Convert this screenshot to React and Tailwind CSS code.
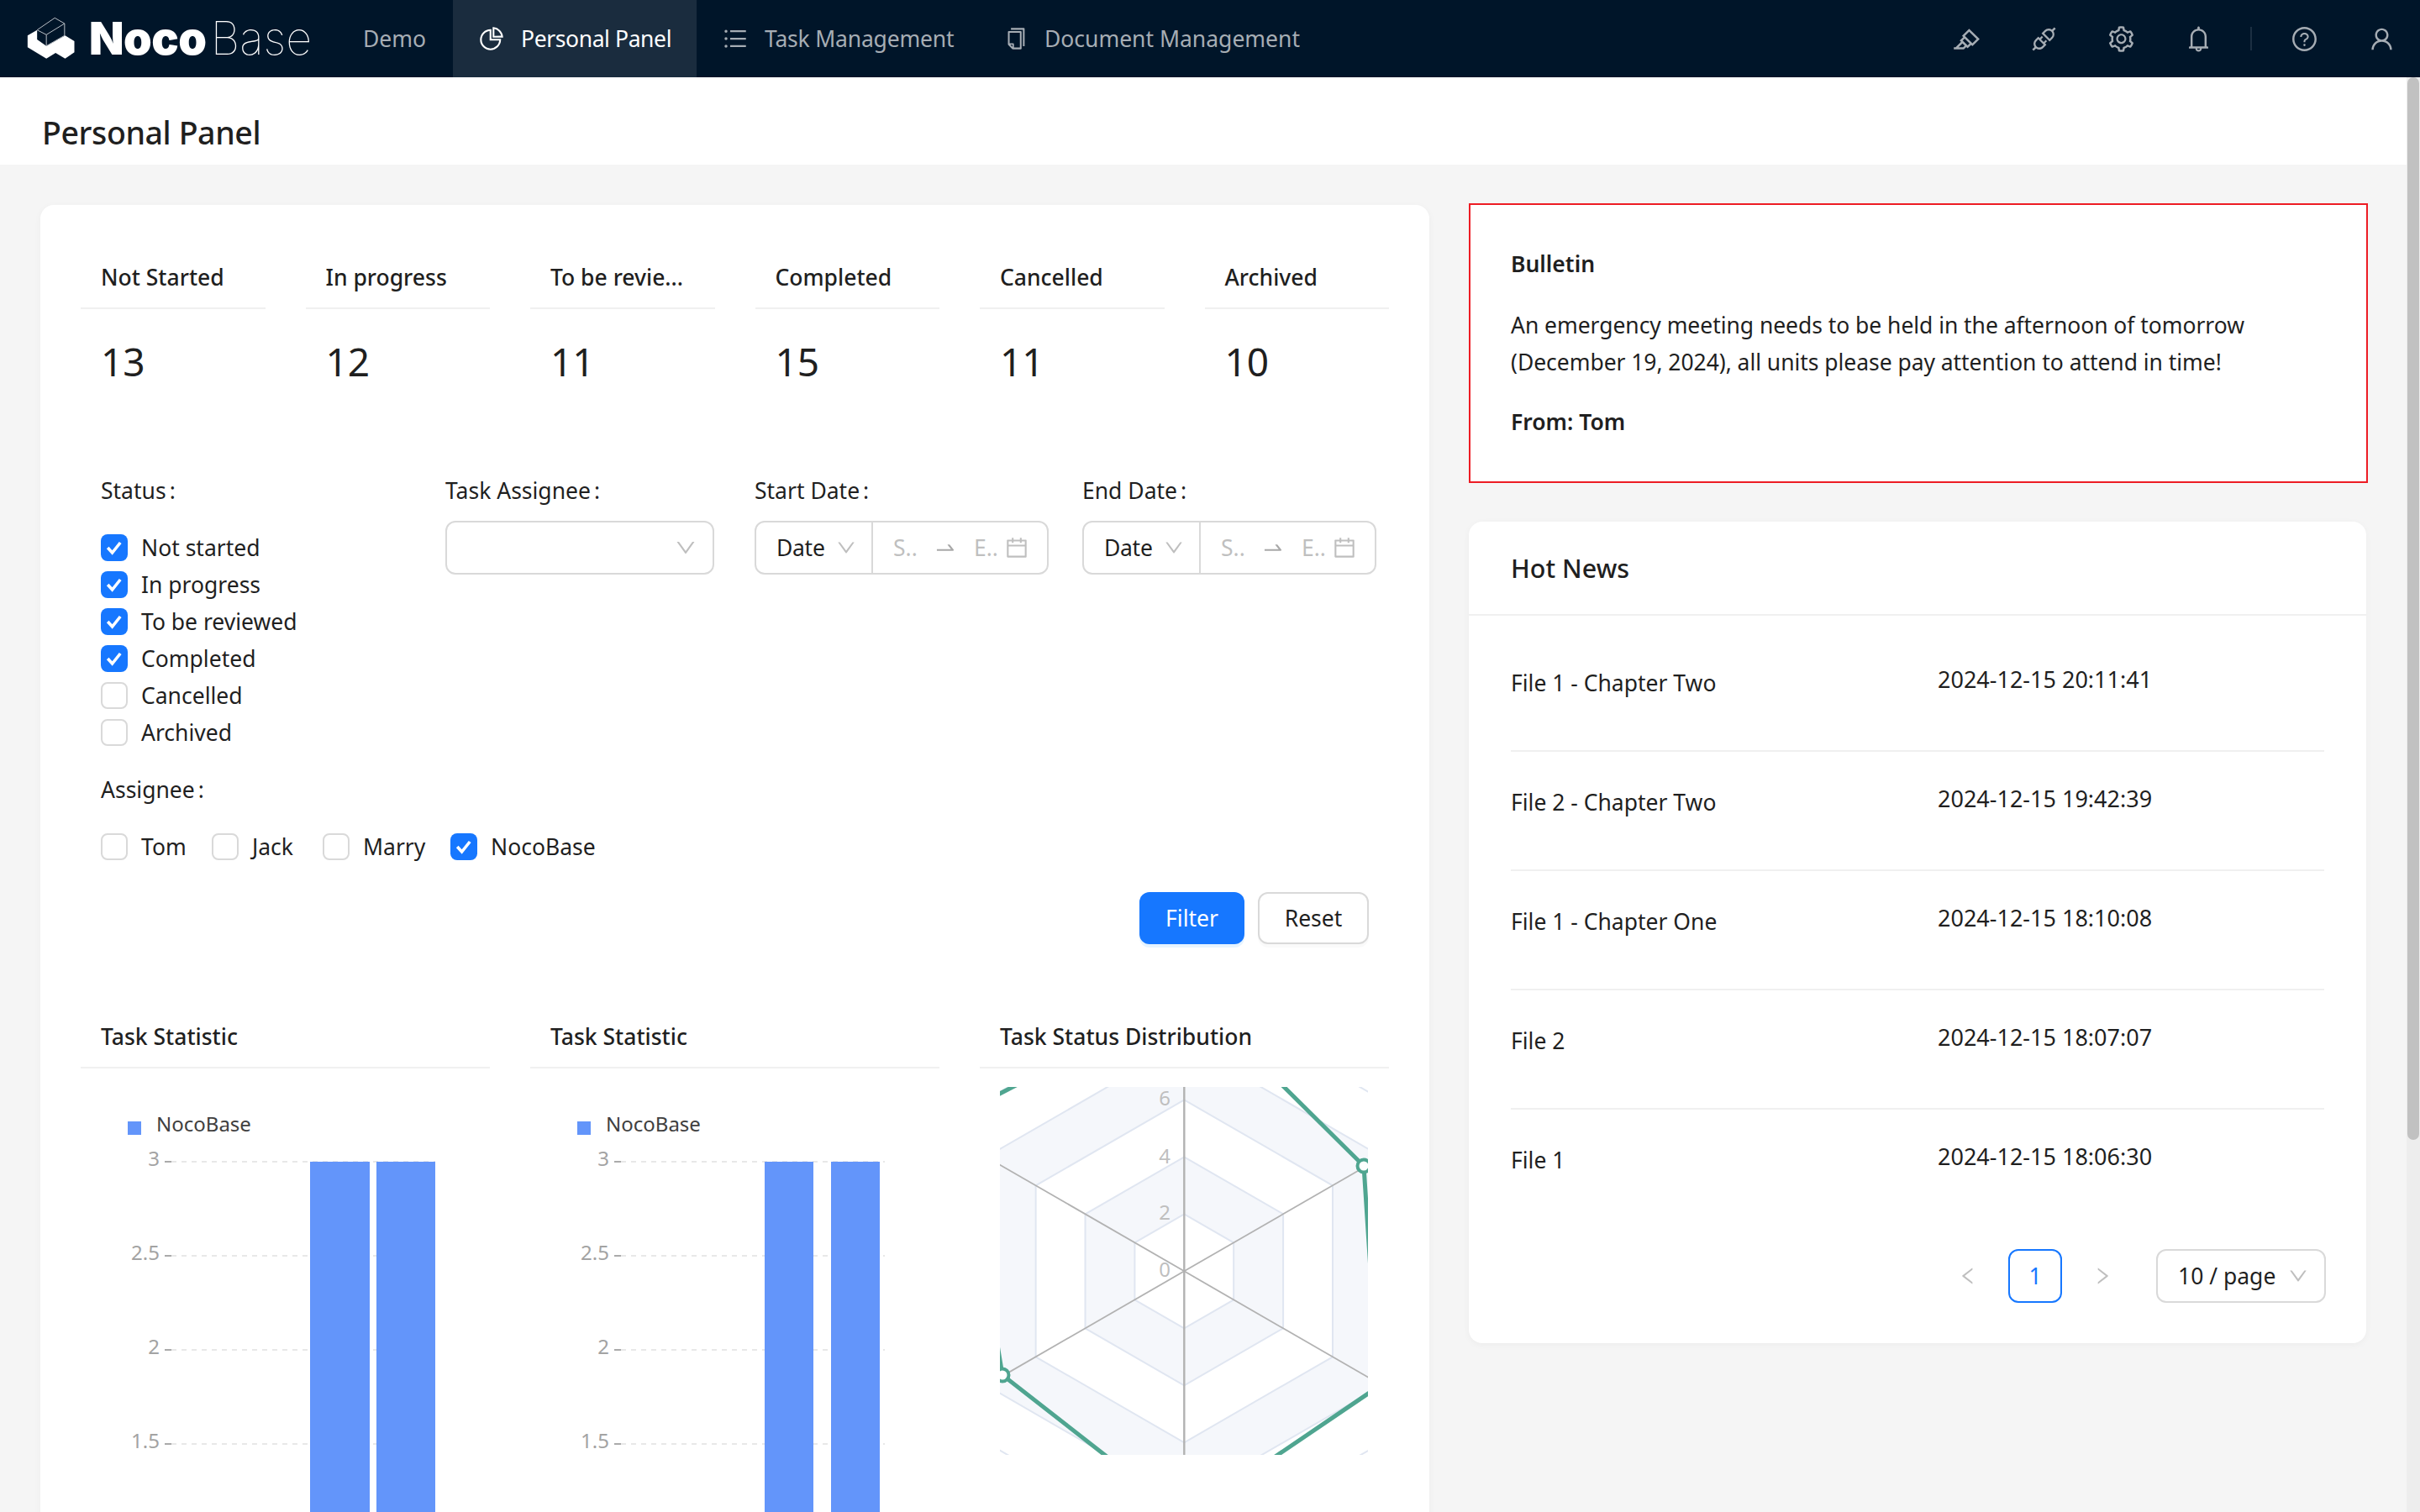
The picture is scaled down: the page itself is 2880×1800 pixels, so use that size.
import React from "react";
import {
  AiOutlineHighlight, AiOutlineApi, AiOutlineSetting, AiOutlineBell, AiOutlineQuestionCircle,
  AiOutlineUser, AiOutlinePieChart, AiOutlineUnorderedList, AiOutlineCopy, AiOutlineDown,
  AiOutlineCalendar, AiOutlineSwapRight, AiOutlineLeft, AiOutlineRight,
} from "react-icons/ai";

function Logo() {
  return (
    <div className="flex items-center w-[400px] pl-[30px] shrink-0">
      <svg width="62" height="55" viewBox="30 25 185 165" className="shrink-0 mb-[1px]">
        <polygon fill="#fff" points="38,98 72,78 72,112 105,135 172,98 205,118 205,158 172,180 138,160 105,180 38,140" />
        <path d="M72 78 L135 35 L170 55 L170 98 L105 135 L105 95 Z M105 95 L170 55" fill="#001529" stroke="#b9bfc5" strokeWidth="3" strokeLinejoin="round" />
      </svg>
      <div className="flex items-center ml-[14px] font-['Inter',sans-serif] text-[54px] leading-[92px] text-white tracking-[-0.5px]">
        <span className="font-black">Noco</span>
        <span className="font-thin ml-[5px] tracking-[0px]">Base</span>
      </div>
    </div>
  );
}

function NavItem({ icon: Icon, label, active, width, tracking }) {
  return (
    <div className={(active ? "bg-[#1a2c3e] text-white " : "text-[#a6adb4] ") + "flex items-center h-[92px] pl-[32px] shrink-0 " + width}>
      {Icon ? <Icon size={32} className="-ml-[2px] mr-[19px]" /> : null}
      <span className={"whitespace-nowrap " + (tracking || "")}>{label}</span>
    </div>
  );
}

function Header() {
  const rightA = [AiOutlineHighlight, AiOutlineApi, AiOutlineSetting, AiOutlineBell];
  return (
    <div className="flex items-center h-[92px] bg-[#001529] shrink-0">
      <Logo />
      <div className="flex items-center">
        <NavItem label="Demo" width="w-[139px]" />
        <NavItem label="Personal Panel" icon={AiOutlinePieChart} active width="w-[290px]" tracking="tracking-[-0.4px]" />
        <NavItem label="Task Management" icon={AiOutlineUnorderedList} width="w-[336px]" tracking="tracking-[-0.2px]" />
        <NavItem label="Document Management" icon={AiOutlineCopy} width="w-[382px]" />
      </div>
      <div className="ml-auto flex items-center text-[#a6adb4]">
        {rightA.map((I, i) => (
          <div key={i} className="w-[92px] h-[92px] flex items-center justify-center"><I size={35} /></div>
        ))}
        <div className="w-[2px] h-[28px] bg-[#1c2f42] mx-[16px]" />
        <div className="w-[92px] h-[92px] flex items-center justify-center"><AiOutlineQuestionCircle size={33} /></div>
        <div className="w-[92px] h-[92px] flex items-center justify-center"><AiOutlineUser size={33} /></div>
      </div>
    </div>
  );
}

function Check({ checked }) {
  return (
    <span className={checked ? "w-[32px] h-[32px] rounded-[8px] bg-[#1677ff] flex items-center justify-center shrink-0" : "w-[32px] h-[32px] rounded-[8px] border-2 border-[#d9d9d9] bg-white shrink-0"}>
      {checked ? (
        <svg width="24" height="24" viewBox="0 0 20 20"><polyline points="3.5,10 8,15 16,5" fill="none" stroke="#fff" strokeWidth="3" /></svg>
      ) : null}
    </span>
  );
}

function CheckItem({ label, checked, className }) {
  return (
    <div className={"flex items-center h-[44px] " + (className || "")}>
      <Check checked={checked} />
      <span className="ml-[16px]">{label}</span>
    </div>
  );
}

function FormLabel({ children }) {
  return <div className="h-[44px] leading-[44px]">{children}<span className="ml-[4px]">:</span></div>;
}

function DateRange() {
  return (
    <div className="flex w-[350px] h-[64px] border-2 border-[#d9d9d9] rounded-[12px] items-center">
      <div className="w-[139px] h-full flex items-center pl-[24px] border-r-2 border-[#d9d9d9] shrink-0">
        <span className="tracking-[-0.3px]">Date</span>
        <AiOutlineDown size={26} className="ml-[12px] text-[#bfbfbf]" />
      </div>
      <div className="flex-1 flex items-center pl-[24px] text-[#bfbfbf]">
        <span className="w-[40px]">S..</span>
        <AiOutlineSwapRight size={28} className="ml-[8px] text-[#a8a8a8]" />
        <span className="ml-[20px] w-[36px]">E..</span>
        <AiOutlineCalendar size={30} className="text-[#bfbfbf]" />
      </div>
    </div>
  );
}

function Stat({ label, value }) {
  return (
    <div className="flex-1 min-w-0">
      <div className="h-[74px] flex items-center pl-[24px] border-b-2 border-[#f0f0f0] font-medium whitespace-nowrap">{label}</div>
      <div className="h-[124px] flex items-center pl-[24px] text-[46px]">{value}</div>
    </div>
  );
}

function BarChart({ bars }) {
  const ticks = [["3", 111], ["2.5", 223], ["2", 335], ["1.5", 447]];
  return (
    <svg width="487" height="528" className="block">
      <rect x="56" y="63" width="16" height="16" fill="#6395fa" />
      <text x="90" y="69" dominantBaseline="middle" fontSize="24" fill="#404040">NocoBase</text>
      {ticks.map(([t, y]) => (
        <g key={t}>
          <line x1="108" x2="422" y1={y} y2={y} stroke="#e8e8e8" strokeWidth="2" strokeDasharray="6 6" />
          <line x1="100" x2="108" y1={y} y2={y} stroke="#aaaaaa" strokeWidth="2" />
          <text x="94" y={y - 1} textAnchor="end" dominantBaseline="middle" fontSize="24" fill="#a3a3a3">{t}</text>
        </g>
      ))}
      {bars.map(([x, w]) => (
        <rect key={x} x={x} y="111" width={w} height="420" fill="#6395fa" />
      ))}
    </svg>
  );
}

function Radar() {
  const c = [1409.3, 1514.3];
  const hex = (r) =>
    [-90, -30, 30, 90, 150, 210]
      .map((d) => {
        const a = (d * Math.PI) / 180;
        return `${c[0] + r * Math.cos(a)},${c[1] + r * Math.sin(a)}`;
      })
      .join(" ");
  const spoke = (d) => {
    const a = (d * Math.PI) / 180;
    return [c[0] + 340 * Math.cos(a), c[1] + 340 * Math.sin(a)];
  };
  return (
    <svg width="438" height="438" viewBox="1190 1295 438 438" className="block ml-[24px] mt-[22px]">
      <polygon points={hex(340)} fill="#fff" stroke="#e0e6f1" strokeWidth="2" />
      <polygon points={hex(272)} fill="#f5f7fb" stroke="#e0e6f1" strokeWidth="2" />
      <polygon points={hex(204)} fill="#fff" stroke="#e0e6f1" strokeWidth="2" />
      <polygon points={hex(136)} fill="#f5f7fb" stroke="#e0e6f1" strokeWidth="2" />
      <polygon points={hex(68)} fill="#fff" stroke="#e0e6f1" strokeWidth="2" />
      {[-90, -30, 30, 90, 150, 210].map((d) => {
        const [x, y] = spoke(d);
        return <line key={d} x1={c[0]} y1={c[1]} x2={x} y2={y} stroke="#b2b2b2" strokeWidth={d === 90 || d === -90 ? 2.4 : 1.8} />;
      })}
      {[["6", 1311], ["4", 1380], ["2", 1447], ["0", 1515]].map(([t, y]) => (
        <text key={t} x="1393" y={y} textAnchor="end" dominantBaseline="middle" fontSize="24" fill="#bfbfbf">{t}</text>
      ))}
      <g fill="none" stroke="#4fa590" strokeWidth="5">
        <polyline points="1515,1282 1623,1389 1640,1652 1500,1747" />
        <polyline points="1185,1590 1193,1638 1330,1745" />
        <polyline points="1180,1308 1215,1290" />
      </g>
      <circle cx="1623" cy="1389" r="7.5" fill="#fff" stroke="#4fa590" strokeWidth="4" />
      <circle cx="1193" cy="1638" r="7.5" fill="#fff" stroke="#4fa590" strokeWidth="4" />
    </svg>
  );
}

function ChartCol({ title, children }) {
  return (
    <div className="flex-1 min-w-0">
      <div className="h-[74px] flex items-center pl-[24px] border-b-2 border-[#f0f0f0] font-medium">{title}</div>
      {children}
    </div>
  );
}

const news = [
  ["File 1 - Chapter Two", "2024-12-15 20:11:41"],
  ["File 2 - Chapter Two", "2024-12-15 19:42:39"],
  ["File 1 - Chapter One", "2024-12-15 18:10:08"],
  ["File 2", "2024-12-15 18:07:07"],
  ["File 1", "2024-12-15 18:06:30"],
];

export default function App() {
  return (
    <div className="w-[2880px] h-[1800px] overflow-hidden flex flex-col bg-[#f5f5f5] font-['Noto_Sans',sans-serif] text-[26.5px] leading-[44px] text-[#1f1f1f]">
      <Header />
      <div className="flex flex-1 min-h-0">
        <div className="flex-1 min-w-0">
          <div className="h-[104px] bg-white flex items-center pl-[50px] pt-[28px] text-[37.5px] font-medium tracking-[-0.4px]">Personal Panel</div>
          <div className="flex gap-[47px] px-[48px] pt-[48px]">
            <div className="w-[1653px] shrink-0 bg-white rounded-[16px] shadow-[0_2px_8px_rgba(0,0,0,0.04)] px-[48px] pt-[50px] pb-[48px]">
              <div className="flex gap-[48px]">
                <Stat label="Not Started" value="13" />
                <Stat label="In progress" value="12" />
                <Stat label="To be revie..." value="11" />
                <Stat label="Completed" value="15" />
                <Stat label="Cancelled" value="11" />
                <Stat label="Archived" value="10" />
              </div>
              <div className="pl-[24px] mt-[70px]">
                <div className="flex">
                  <div className="w-[410px] shrink-0">
                    <FormLabel>Status</FormLabel>
                    <div className="mt-[24px]">
                      <CheckItem label="Not started" checked />
                      <CheckItem label="In progress" checked />
                      <CheckItem label="To be reviewed" checked />
                      <CheckItem label="Completed" checked />
                      <CheckItem label="Cancelled" />
                      <CheckItem label="Archived" />
                    </div>
                  </div>
                  <div className="w-[368px] shrink-0">
                    <FormLabel>Task Assignee</FormLabel>
                    <div className="mt-[14px] w-[320px] h-[64px] border-2 border-[#d9d9d9] rounded-[12px] flex items-center justify-end pr-[18px]">
                      <AiOutlineDown size={28} className="text-[#bfbfbf]" />
                    </div>
                  </div>
                  <div className="w-[390px] shrink-0">
                    <FormLabel>Start Date</FormLabel>
                    <div className="mt-[14px]"><DateRange /></div>
                  </div>
                  <div className="w-[350px] shrink-0">
                    <FormLabel>End Date</FormLabel>
                    <div className="mt-[14px]"><DateRange /></div>
                  </div>
                </div>
                <div className="mt-[24px]"><FormLabel>Assignee</FormLabel></div>
                <div className="mt-[24px] flex">
                  <CheckItem label="Tom" className="w-[132px]" />
                  <CheckItem label="Jack" className="w-[132px]" />
                  <CheckItem label="Marry" className="w-[152px]" />
                  <CheckItem label="NocoBase" checked />
                </div>
                <div className="mt-[32px] flex justify-end gap-[16px] pr-[24px]">
                  <div className="w-[125px] h-[62px] rounded-[12px] bg-[#1677ff] text-white flex items-center justify-center shadow-[0_4px_0_rgba(5,145,255,0.1)]">Filter</div>
                  <div className="w-[132px] h-[62px] rounded-[12px] bg-white border-2 border-[#d9d9d9] flex items-center justify-center shadow-[0_4px_0_rgba(0,0,0,0.02)]">Reset</div>
                </div>
              </div>
              <div className="mt-[74px] flex gap-[48px]">
                <ChartCol title="Task Statistic"><BarChart bars={[[273, 71], [352, 70]]} /></ChartCol>
                <ChartCol title="Task Statistic"><BarChart bars={[[279, 58], [358, 58]]} /></ChartCol>
                <ChartCol title="Task Status Distribution"><Radar /></ChartCol>
              </div>
            </div>
            <div className="flex-1 min-w-0 -mt-[2px] flex flex-col gap-[46px]">
              <div className="border-2 border-[#ed1c24] bg-white -mr-[2px]">
                <div className="h-[329px] rounded-[16px] bg-white pl-[48px] pr-[40px] pt-[48px] text-[#1f1f1f]">
                  <div className="font-semibold">Bulletin</div>
                  <div className="mt-[29px] tracking-[-0.05px]">An emergency meeting needs to be held in the afternoon of tomorrow (December 19, 2024), all units please pay attention to attend in time!</div>
                  <div className="mt-[27px] font-semibold">From: Tom</div>
                </div>
              </div>
              <div className="bg-white rounded-[16px] shadow-[0_2px_8px_rgba(0,0,0,0.04)] pb-[48px]">
                <div className="h-[112px] flex items-center pl-[50px] border-b-2 border-[#f0f0f0] text-[30.5px] font-medium">Hot News</div>
                <div className="px-[50px] pt-[20px]">
                  {news.map(([t, d], i) => (
                    <div key={i} className={i < 4 ? "h-[142px] flex border-b-2 border-[#f0f0f0]" : "h-[142px] flex"}>
                      <div className="w-[508px] pt-[38px]">{t}</div>
                      <div className="pt-[34px] text-[27px]">{d}</div>
                    </div>
                  ))}
                </div>
                <div className="mt-[24px] flex justify-end items-center pr-[48px]">
                  <div className="w-[64px] h-[64px] flex items-center justify-center text-[#bfbfbf]"><AiOutlineLeft size={26} /></div>
                  <div className="w-[64px] h-[64px] ml-[16px] rounded-[12px] border-2 border-[#1677ff] text-[#1677ff] flex items-center justify-center">1</div>
                  <div className="w-[64px] h-[64px] ml-[16px] flex items-center justify-center text-[#bfbfbf]"><AiOutlineRight size={26} /></div>
                  <div className="w-[202px] h-[64px] ml-[32px] rounded-[12px] border-2 border-[#d9d9d9] flex items-center justify-between pl-[24px] pr-[18px]">
                    <span className="whitespace-nowrap">10 / page</span>
                    <AiOutlineDown size={26} className="text-[#bfbfbf]" />
                  </div>
                </div>
              </div>
            </div>
          </div>
        </div>
        <div className="w-[16px] shrink-0 bg-[#ededed]">
          <div className="w-[14px] ml-[1px] h-[1265px] rounded-full bg-[#c1c1c1]" />
        </div>
      </div>
    </div>
  );
}
